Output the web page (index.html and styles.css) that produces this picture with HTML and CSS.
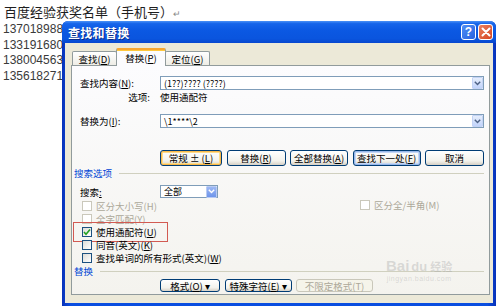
FILE: index.html
```html
<!DOCTYPE html>
<html lang="zh">
<head>
    <meta charset="UTF-8">
    <meta name="viewport" content="width=device-width, initial-scale=1.0">
    <title>查找和替换</title>
    <link rel="stylesheet" href="styles.css">
</head>
<body>
    <div class="doc">
        <div class="doc-title">百度经验获奖名单（手机号）<span class="para">↵</span></div>
        <div class="doc-line">137018988</div>
        <div class="doc-line">133191680</div>
        <div class="doc-line">138004563</div>
        <div class="doc-line">135618271</div>
    </div>

    <div class="dialog">
        <div class="titlebar">
            <span class="title">查找和替换</span>
            <div class="title-btns">
                <span class="tb-btn help">?</span>
                <span class="tb-btn close">
                    <svg width="10" height="10" viewBox="0 0 10 10"><path d="M1.5 1.5 L8.5 8.5 M8.5 1.5 L1.5 8.5" stroke="#fff" stroke-width="2" stroke-linecap="round"/></svg>
                </span>
            </div>
        </div>
        <div class="dlg-body">
            <div class="tabs">
                <span class="tab">查找(<u>D</u>)</span>
                <span class="tab active">替换(<u>P</u>)</span>
                <span class="tab">定位(<u>G</u>)</span>
            </div>
            <div class="panel">
                <div class="row">
                    <span class="label">查找内容(<u>N</u>):</span>
                    <div class="combo wide">
                        <span class="combo-text">(1??)???? (????)</span>
                        <span class="arrow"><svg width="7" height="5" viewBox="0 0 7 5"><path d="M0.8 0.8 L3.5 3.6 L6.2 0.8" fill="none" stroke="#4d6185" stroke-width="1.4"/></svg></span>
                    </div>
                </div>
                <div class="row options">
                    <span class="label right">选项:</span>
                    <span>使用通配符</span>
                </div>
                <div class="row replace">
                    <span class="label">替换为(<u>I</u>):</span>
                    <div class="combo wide">
                        <span class="combo-text">\1****\2</span>
                        <span class="arrow"><svg width="7" height="5" viewBox="0 0 7 5"><path d="M0.8 0.8 L3.5 3.6 L6.2 0.8" fill="none" stroke="#4d6185" stroke-width="1.4"/></svg></span>
                    </div>
                </div>
                <div class="btn-row">
                    <span class="btn hot w62">常规 ± (<u>L</u>)</span>
                    <span class="btn w59">替换(<u>R</u>)</span>
                    <span class="btn w58">全部替换(<u>A</u>)</span>
                    <span class="btn default w68">查找下一处(<u>F</u>)</span>
                    <span class="btn w59">取消</span>
                </div>

                <div class="section">
                    <span class="section-name">搜索选项</span>
                    <span class="section-line"></span>
                </div>
                <div class="row search">
                    <span class="label">搜索<u>:</u></span>
                    <div class="combo small">
                        <span class="combo-text">全部</span>
                        <span class="arrow blue"><svg width="7" height="5" viewBox="0 0 7 5"><path d="M0.8 0.8 L3.5 3.6 L6.2 0.8" fill="none" stroke="#fff" stroke-width="1.4"/></svg></span>
                    </div>
                </div>
                <div class="checks">
                    <div class="check-row">
                        <span class="check disabled"><span class="box"></span>区分大小写(H)</span>
                        <span class="check disabled right-check"><span class="box"></span>区分全/半角(M)</span>
                    </div>
                    <div class="check-row">
                        <span class="check disabled"><span class="box"></span>全字匹配(Y)</span>
                    </div>
                    <div class="check-row">
                        <span class="check marked"><span class="box"><svg width="8" height="8" viewBox="0 0 8 8"><path d="M1 4 L3 6.2 L7 1.5" fill="none" stroke="#21a121" stroke-width="1.6"/></svg></span>使用通配符(<u>U</u>)</span>
                    </div>
                    <div class="check-row">
                        <span class="check"><span class="box"></span>同音(英文)(<u>K</u>)</span>
                    </div>
                    <div class="check-row">
                        <span class="check"><span class="box"></span>查找单词的所有形式(英文)(<u>W</u>)</span>
                    </div>
                </div>
                <div class="section">
                    <span class="section-name">替换</span>
                    <span class="section-line"></span>
                </div>
                <div class="btn-row bottom">
                    <span class="btn w60">格式(<u>O</u>) ▾</span>
                    <span class="btn w67">特殊字符(<u>E</u>) ▾</span>
                    <span class="btn off w77">不限定格式(T)</span>
                </div>
                <div class="watermark">
                    <span class="wm-logo">Bai<span class="wm-du">du</span><span class="wm-jy">经验</span></span>
                    <span class="wm-url">jingyan.baidu.com</span>
                </div>
            </div>
        </div>
    </div>
</body>
</html>
```

FILE: styles.css
```css
body {
    margin: 0;
    background: #fff;
    font-family: 'Noto Sans CJK SC', sans-serif;
    width: 500px;
    height: 308px;
    overflow: hidden;
    position: relative;
}
u {
    text-decoration: underline;
}

/* document behind the dialog */
.doc {
    padding: 4px 0 0 4px;
}
.doc-title {
    font-size: 13px;
    line-height: 16px;
    color: #1e1e1e;
    white-space: nowrap;
}
.para {
    font-size: 9px;
    color: #888;
}
.doc-line {
    font-family: 'Liberation Sans', Arial, sans-serif;
    font-size: 12px;
    line-height: 15.7px;
    color: #3a3a3a;
    margin-left: -1px;
}

/* dialog window */
.dialog {
    position: absolute;
    left: 62px;
    top: 21px;
    width: 434px;
    height: 285px;
    box-sizing: border-box;
    padding: 0 3px 3px 3px;
    background: linear-gradient(90deg, #0831b8 0%, #0a4ee0 2%, #0a4ee0 98%, #0831b8 100%);
    border-radius: 6px 6px 0 0;
    display: flex;
    flex-direction: column;
}
.titlebar {
    height: 22px;
    flex-shrink: 0;
    display: flex;
    align-items: center;
    justify-content: space-between;
    margin: 0 -3px;
    padding: 0 3px 0 6px;
    border-radius: 6px 6px 0 0;
    background: linear-gradient(#4b92f6 0%, #1665ea 12%, #0b58e2 45%, #0a55de 80%, #0747cf 100%);
}
.title {
    color: #fff;
    font-size: 12px;
    font-weight: 700;
    letter-spacing: 0.3px;
    text-shadow: 1px 1px 0 #0a2a8a;
}
.title-btns {
    display: flex;
    gap: 2px;
}
.tb-btn {
    width: 15px;
    height: 16px;
    box-sizing: border-box;
    border: 1px solid #fff;
    border-radius: 3px;
    display: flex;
    align-items: center;
    justify-content: center;
    color: #fff;
    font-family: 'Liberation Sans', Arial, sans-serif;
    font-weight: 700;
    font-size: 12px;
}
.help {
    background: linear-gradient(135deg, #4f8ff5, #2660e0);
}
.close {
    background: linear-gradient(135deg, #e9805f, #d54421);
}

.dlg-body {
    flex: 1;
    min-height: 0;
    background: #ece9d8;
    padding: 4px 3px 8px 6px;
    display: flex;
    flex-direction: column;
    font-size: 9.5px;
    color: #000;
}

/* tabs */
.tabs {
    display: flex;
    align-items: flex-end;
    height: 18px;
    flex-shrink: 0;
    padding-left: 1px;
    position: relative;
    z-index: 1;
}
.tab {
    width: 45px;
    height: 14px;
    box-sizing: border-box;
    display: flex;
    align-items: center;
    justify-content: center;
    white-space: nowrap;
    border: 1px solid #919b9c;
    border-bottom: none;
    border-radius: 2px 2px 0 0;
    background: linear-gradient(#fff, #eeede6);
    margin-right: -1px;
}
.tab.active {
    width: 50px;
    height: 18px;
    background: #fcfcfe;
    border-top: 2px solid #f7a731;
    box-shadow: inset 0 1px 0 #ffc83c;
    margin-bottom: -1px;
}
.panel {
    flex: 1;
    border: 1px solid #919b9c;
    background: linear-gradient(#fcfcfe, #f4f3ee);
    padding: 10px 5px 0 8px;
    display: flex;
    flex-direction: column;
    position: relative;
}

.row {
    display: flex;
    align-items: center;
    height: 14px;
    flex-shrink: 0;
}
.label {
    width: 80px;
    flex-shrink: 0;
}
.label.right {
    width: 70px;
    text-align: right;
    margin-right: 10px;
}
.options {
    height: 13px;
}
.replace {
    margin-top: 11px;
}

.combo {
    height: 14px;
    box-sizing: border-box;
    border: 1px solid #7f9db9;
    background: #fff;
    display: flex;
    align-items: center;
    justify-content: space-between;
    padding-left: 3px;
}
.combo.wide {
    width: 325px;
}
.combo.small {
    width: 58px;
}
.combo-text {
    font-size: 9px;
    white-space: nowrap;
}
.arrow {
    width: 11px;
    height: 12px;
    box-sizing: border-box;
    border: 1px solid #c3d3f5;
    border-radius: 1px;
    background: linear-gradient(#e6eefc, #c1d3fb);
    display: flex;
    align-items: center;
    justify-content: center;
}
.arrow.blue {
    border-color: #b9cbf3;
    background: linear-gradient(#9db8f4, #6e95ea);
}

/* buttons */
.btn-row {
    display: flex;
    gap: 4.5px;
    margin-top: 22px;
    margin-left: 80px;
    flex-shrink: 0;
}
.btn {
    height: 16px;
    box-sizing: border-box;
    border: 1px solid #003c74;
    border-radius: 3px;
    background: linear-gradient(#ffffff, #f3f2ec 70%, #d6d0c5);
    display: flex;
    align-items: center;
    justify-content: center;
    white-space: nowrap;
}
.btn.hot {
    box-shadow: inset 0 0 0 1px #f9b94a, inset 0 0 0 2px #fddc8e;
}
.btn.default {
    box-shadow: inset 0 0 0 1px #98b8ea, inset 0 0 0 2px #c4d6f4;
}
.btn.off {
    border-color: #c9c7ba;
    color: #aca899;
    background: #f5f4ea;
}
.w58 { width: 58px; }
.w59 { width: 59px; }
.w60 { width: 60px; }
.w62 { width: 62px; }
.w67 { width: 67px; }
.w68 { width: 68px; }
.w77 { width: 77px; }

.section {
    display: flex;
    align-items: center;
    height: 12px;
    flex-shrink: 0;
    margin-left: -6px;
    margin-top: 1px;
}
.section-name {
    color: #0046d5;
}
.section-line {
    flex: 1;
    height: 1px;
    background: #d0d0bf;
    margin-left: 7px;
}
.search {
    margin-top: 6px;
    height: 13px;
}
.search .combo {
    height: 13px;
}

/* checkboxes */
.checks {
    margin-top: 1px;
    display: flex;
    flex-direction: column;
    flex-shrink: 0;
}
.check-row {
    height: 13px;
    display: flex;
    align-items: center;
    position: relative;
}
.check {
    display: flex;
    align-items: center;
    white-space: nowrap;
}
.box {
    width: 10px;
    height: 10px;
    box-sizing: border-box;
    border: 1px solid #1c5180;
    background: linear-gradient(135deg, #dcdcd7, #fff);
    margin: 0 4px 0 2px;
    display: flex;
    align-items: center;
    justify-content: center;
}
.check.disabled {
    color: #aca899;
}
.check.disabled .box {
    border-color: #cac8bb;
    background: #fff;
}
.right-check {
    position: absolute;
    left: 278px;
    top: -1px;
}
.check.marked {
    outline: 1px solid #d25a52;
    outline-offset: 2px;
    margin-left: -4px;
    padding-left: 4px;
    padding-right: 8px;
}
.btn-row.bottom {
    margin-top: 2px;
}
.btn-row.bottom .btn {
    height: 13px;
}

/* faint site watermark */
.watermark {
    position: absolute;
    left: 314px;
    top: 192px;
    display: flex;
    flex-direction: column;
    align-items: center;
    color: rgba(160, 160, 160, 0.35);
    pointer-events: none;
}
.wm-logo {
    font-family: 'Liberation Sans', Arial, sans-serif;
    font-weight: 700;
    font-size: 15px;
    line-height: 16px;
}
.wm-du {
    font-size: 13px;
    margin-left: 2px;
}
.wm-jy {
    font-family: 'Noto Sans CJK SC', sans-serif;
    font-size: 11px;
    margin-left: 3px;
}
.wm-url {
    font-family: 'Liberation Sans', Arial, sans-serif;
    font-size: 7px;
    letter-spacing: 0.5px;
}
```
